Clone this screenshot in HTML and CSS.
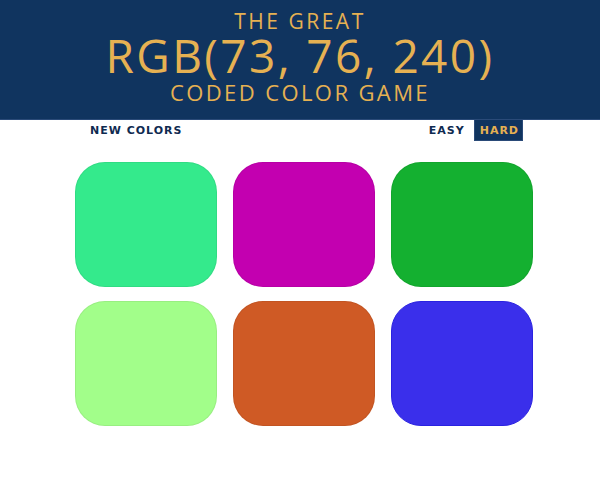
FILE: index.html
```html
<!DOCTYPE html>
<html>
<head>
<meta charset="utf-8">
<link rel="stylesheet" href="styles.css">
</head>
<body>
<header class="top">
  <div class="t-small">THE GREAT</div>
  <div class="t-big">RGB(73, 76, 240)</div>
  <div class="t-mid">CODED COLOR GAME</div>
</header>
<nav class="bar">
  <span class="btn">NEW COLORS</span>
  <span class="modes">
    <span class="btn">EASY</span>
    <span class="btn active">HARD</span>
  </span>
</nav>
<main class="grid">
  <div class="sq c1"></div>
  <div class="sq c2"></div>
  <div class="sq c3"></div>
  <div class="sq c4"></div>
  <div class="sq c5"></div>
  <div class="sq c6"></div>
</main>
</body>
</html>
```
FILE: styles.css
```css
html, body { margin: 0; padding: 0; background: #fff; }
body { font-family: "Open Sans", "Lato", sans-serif; }
.top {
  height: 119px;
  background: #10345f;
  border-bottom: 1px solid #2a4a78;
  color: #e6b152;
  text-align: center;
  display: flex;
  flex-direction: column;
  align-items: center;
}
.t-small { font-size: 21px; line-height: 21px; margin-top: 11px; letter-spacing: 2.5px; }
.t-big { font-size: 46px; line-height: 46px; margin-top: 0; letter-spacing: 2.4px; }
.t-mid { font-size: 22px; line-height: 22px; margin-top: 3px; letter-spacing: 2.4px; }
.bar {
  display: flex;
  justify-content: space-between;
  align-items: flex-start;
  margin: 0 77px 0 84px;
  height: 21px;
}
.modes { display: flex; }
.btn {
  font-family: "DejaVu Sans", sans-serif;
  font-size: 11px;
  font-weight: bold;
  letter-spacing: 1px;
  color: #0f2a50;
  padding: 4px 6px 0;
  height: 17px;
  line-height: 14px;
}
.btn.active {
  background: #10345f;
  color: #e6b152;
  border: 1px solid #2a4a78;
  border-top: none;
  height: 16px;
  padding: 4px 3px 0 5px;
  margin-left: 3px;
}
.grid {
  display: grid;
  grid-template-columns: repeat(3, 142px);
  grid-auto-rows: 125px;
  column-gap: 16px;
  row-gap: 14px;
  margin: 21px 0 0 75px;
}
.sq { border-radius: 30px; box-sizing: border-box; border: 1px solid rgba(0,0,0,0.06); }
.c1 { background: #34ea8c; }
.c2 { background: #c300b0; }
.c3 { background: #14b030; }
.c4 { background: #a2fe8a; }
.c5 { background: #cf5a25; }
.c6 { background: #3a2feb; border-color: #2a22e0; }
```
